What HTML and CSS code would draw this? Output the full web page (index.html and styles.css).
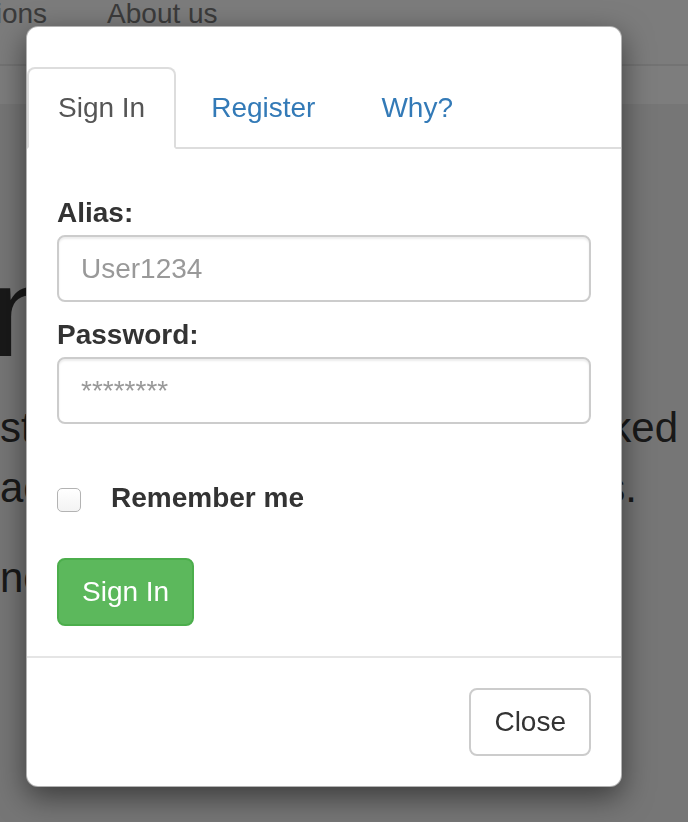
FILE: index.html
```html
<!DOCTYPE html>
<html lang="en">
<head>
<meta charset="utf-8">
<title>Sign In</title>
<link rel="stylesheet" href="styles.css">
</head>
<body>
<div class="page">
  <header class="navbar">
    <ul class="nav-links">
      <li>Questions</li>
      <li>About us</li>
    </ul>
  </header>
  <div class="subbar"></div>
  <main class="hero">
    <h1 class="hero-title">nomad</h1>
    <p class="lead">
      <span class="line line-1">structured and linked</span>
      <span class="line line-2">across all devices.</span>
    </p>
    <p class="lead"><span class="line">no fuss.</span></p>
  </main>
</div>

<div class="backdrop"></div>

<div class="modal" role="dialog">
  <ul class="tabs">
    <li class="tab active"><a href="#">Sign In</a></li>
    <li class="tab"><a href="#">Register</a></li>
    <li class="tab"><a href="#">Why?</a></li>
  </ul>
  <form class="modal-body">
    <div class="form-group">
      <label for="alias">Alias:</label>
      <input class="input" id="alias" type="text" placeholder="User1234">
    </div>
    <div class="form-group">
      <label for="password">Password:</label>
      <input class="input" id="password" type="password" placeholder="********">
    </div>
    <div class="checkbox-row">
      <input class="checkbox" id="remember" type="checkbox">
      <label class="checkbox-label" for="remember">Remember me</label>
    </div>
    <button class="btn btn-success" type="button">Sign In</button>
  </form>
  <div class="modal-footer">
    <button class="btn btn-default" type="button">Close</button>
  </div>
</div>
</body>
</html>
```
FILE: styles.css
```css
* {
  box-sizing: border-box;
}

html, body {
  margin: 0;
  height: 822px;
  overflow: hidden;
}

body {
  font-family: "Liberation Sans", Arial, Helvetica, sans-serif;
  color: #333;
  background: #ececec;
}

/* ---------- background page ---------- */
.navbar {
  height: 66px;
  background: #f8f8f8;
  border-bottom: 2px solid #e7e7e7;
  overflow: hidden;
}

.nav-links {
  list-style: none;
  display: flex;
  margin: -6px 0 0 -109px;
  padding: 0;
  font-size: 28px;
  line-height: 40px;
  color: #777;
}

.nav-links li {
  padding: 0 30px;
}

.subbar {
  height: 38px;
  background: #fafafa;
}

.hero {
  padding-top: 138px;
}

.hero-title {
  margin: 0 0 0 -9px;
  font-size: 128px;
  line-height: 1.1;
  font-weight: normal;
  color: #333;
}

.lead {
  margin: 15px 0 30px;
  font-size: 42px;
  line-height: 60px;
  color: #333;
}

.line {
  display: block;
}

.line-1,
.line-2 {
  text-align: justify;
  text-align-last: justify;
}

.line-1 {
  width: 678px;
}

.line-2 {
  width: 637px;
}

/* ---------- backdrop ---------- */
.backdrop {
  position: fixed;
  inset: 0;
  background: rgba(0, 0, 0, 0.5);
}

/* ---------- modal ---------- */
.modal {
  position: absolute;
  top: 26px;
  left: 26px;
  width: 596px;
  background: #fff;
  border: 1px solid rgba(0, 0, 0, 0.3);
  border-radius: 12px;
  box-shadow: 0 10px 30px rgba(0, 0, 0, 0.5);
  font-size: 28px;
  line-height: 40px;
}

.tabs {
  list-style: none;
  display: flex;
  margin: 0;
  padding: 40px 0 0;
  border-bottom: 2px solid #ddd;
}

.tab {
  margin: 0 4px -2px 0;
}

.tab a {
  display: block;
  padding: 20px 29px;
  line-height: 38px;
  border: 2px solid transparent;
  border-radius: 8px 8px 0 0;
  color: #337ab7;
  text-decoration: none;
}

.tab.active a {
  color: #555;
  background: #fff;
  border-color: #ddd #ddd transparent;
}

.modal-body {
  display: flow-root;
  margin: 0;
  padding: 48px 30px 30px;
}

.form-group {
  margin-bottom: 17px;
}

.form-group label {
  display: block;
  font-weight: bold;
  line-height: 32px;
  margin-bottom: 6px;
}

.input {
  display: block;
  width: 100%;
  height: 67px;
  margin: 0;
  padding: 0 22px;
  border: 2px solid #ccc;
  border-radius: 8px;
  background: #fff;
  box-shadow: inset 0 2px 2px rgba(0, 0, 0, 0.075);
  font-family: inherit;
  font-size: 28px;
  color: #555;
}

.input::placeholder {
  color: #999;
  opacity: 1;
}

.checkbox-row {
  display: flex;
  align-items: center;
  margin: 54px 0 40px;
  line-height: 40px;
}

.checkbox {
  appearance: none;
  -webkit-appearance: none;
  width: 24px;
  height: 24px;
  margin: 4px 30px 0 0;
  border: 1px solid #b3b3b3;
  border-radius: 5px;
  background: linear-gradient(#ffffff, #f3f3f3);
  flex: none;
}

.checkbox-label {
  font-weight: bold;
}

.btn {
  display: inline-block;
  height: 68px;
  margin: 0;
  padding: 12px 23px;
  border: 2px solid transparent;
  border-radius: 8px;
  font-family: inherit;
  font-size: 28px;
  line-height: 40px;
  vertical-align: top;
}

.btn-success {
  color: #fff;
  background: #5cb85c;
  border-color: #4cae4c;
}

.btn-default {
  color: #333;
  background: #fff;
  border-color: #ccc;
}

.modal-footer {
  padding: 30px;
  border-top: 2px solid #e5e5e5;
  text-align: right;
}
```
